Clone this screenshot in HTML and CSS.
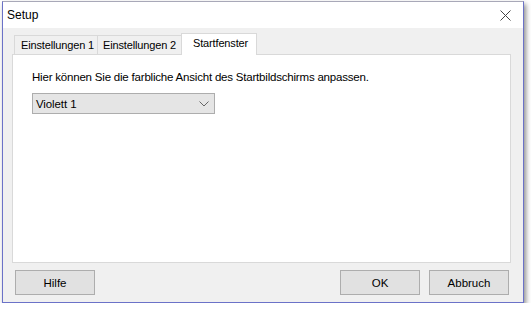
FILE: index.html
```html
<!DOCTYPE html>
<html lang="de">
<head>
  <meta charset="UTF-8">
  <title>Setup</title>
  <link rel="stylesheet" href="styles.css">
</head>
<body>

<div class="window">
  <div class="titlebar">
    <span class="title">Setup</span>
    <button class="close" type="button" aria-label="Schließen">
      <svg width="11" height="11" viewBox="0 0 11 11"><path d="M0.5 0.5 L10.5 10.5 M10.5 0.5 L0.5 10.5" stroke="#444" stroke-width="1" fill="none"/></svg>
    </button>
  </div>

  <div class="content">
    <div class="tabs">
      <div class="tab first">Einstellungen 1</div>
      <div class="tab second">Einstellungen 2</div>
      <div class="tab active">Startfenster</div>
    </div>
    <div class="panel">
      <p class="hint">Hier können Sie die farbliche Ansicht des Startbildschirms anpassen.</p>
      <div class="combo">
        <span>Violett 1</span>
        <svg width="10" height="6" viewBox="0 0 10 6"><path d="M0.5 0.5 L5 5 L9.5 0.5" stroke="#666" stroke-width="1" fill="none"/></svg>
      </div>
    </div>
    <div class="buttons">
      <button type="button">Hilfe</button>
      <div class="spacer"></div>
      <button type="button">OK</button>
      <button type="button">Abbruch</button>
    </div>
  </div>
</div>

</body>
</html>
```

FILE: styles.css
```css
* { box-sizing: border-box; }
body { margin: 0; background: #fff; font-family: 'Liberation Sans', Arial, sans-serif; font-size: 11.5px; color: #000; }
.window { width: 522px; height: 302px; margin: 1px 0 0 2px; border: 1px solid #6b72c8; border-top-color: #a8a8b8; background: #f0f0f0; box-shadow: 2px 3px 5px rgba(0,0,0,0.45); display: flex; flex-direction: column; }
.titlebar { height: 26px; background: #fff; display: flex; align-items: center; padding-left: 4px; }
.title { font-size: 12px; flex: 1; }
.close { border: none; background: none; width: 32px; height: 26px; display: flex; align-items: center; justify-content: center; padding: 0; margin-right: 2px; }
.content { flex: 1; display: flex; flex-direction: column; padding: 5px 12px 7px 9px; }
.tabs { display: flex; align-items: flex-end; height: 21px; padding-left: 2px; font-size: 11px; letter-spacing: -0.15px; }
.tab { height: 19px; line-height: 18px; padding-left: 6px; border: 1px solid #d9d9d9; border-bottom: none; background: #f0f0f0; }
.tab.first { width: 84px; }
.tab.second { width: 87px; margin-left: -1px; padding-left: 5px; }
.tab.active { width: 76px; height: 22px; line-height: 19px; background: #fff; margin: 0 0 -1px -3px; padding-left: 11px; position: relative; }
.panel { height: 209px; background: #fff; border: 1px solid #d9d9d9; padding: 0 19px; }
.hint { margin: 16px 0 0; line-height: 13px; letter-spacing: -0.2px; }
.combo { width: 183px; height: 21px; margin-top: 9px; border: 1px solid #adadad; background: #e5e5e5; display: flex; align-items: center; justify-content: space-between; padding: 0 5px 0 3px; letter-spacing: -0.1px; }
.buttons { display: flex; gap: 9px; margin-top: 7px; padding: 0 2px 0 3px; }
.spacer { flex: 1; }
.buttons button { width: 80px; height: 25px; border: 1px solid #adadad; background: #e1e1e1; font: inherit; padding: 0; color: #000; }
```
